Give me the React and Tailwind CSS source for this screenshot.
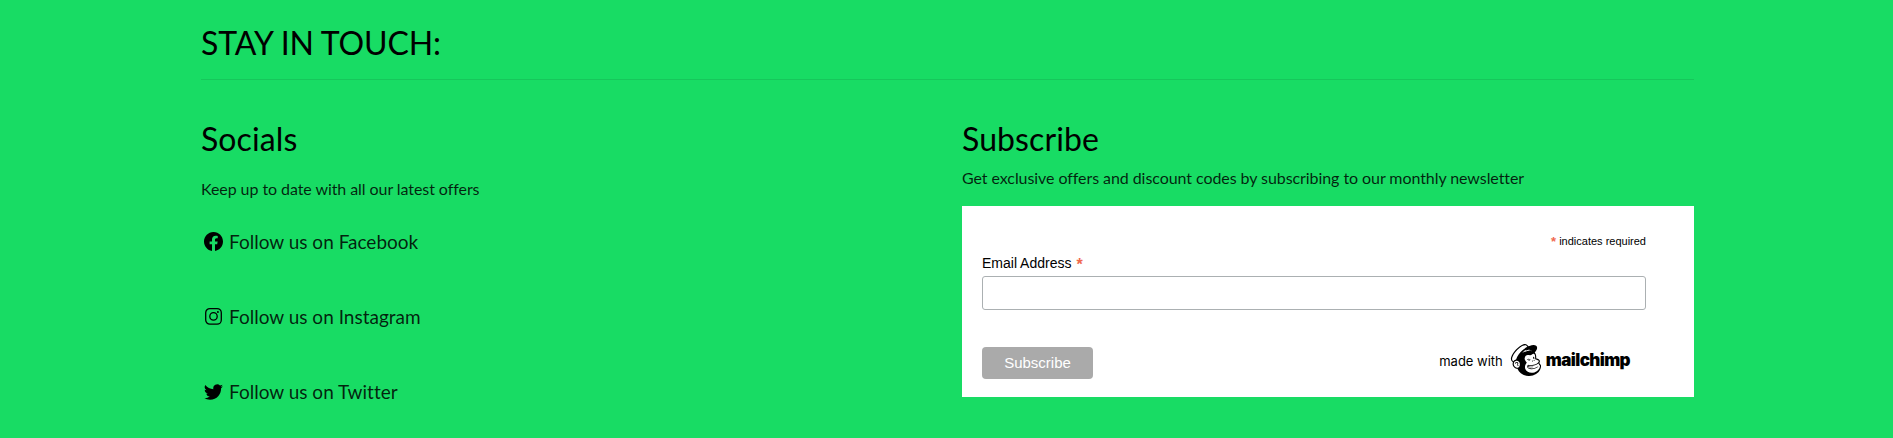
import { BsFacebook, BsTwitter } from "react-icons/bs";
import { SiMailchimp } from "react-icons/si";

function InstagramIcon({ className }) {
  return (
    <svg viewBox="0 0 19 19" fill="none" stroke="currentColor" strokeWidth="1.3" className={className}>
      <rect x="1.7" y="1.6" width="15.6" height="15.6" rx="4.2" />
      <circle cx="9.5" cy="9.4" r="3.7" />
      <circle cx="13.9" cy="5" r="0.95" fill="currentColor" stroke="none" />
    </svg>
  );
}

const socials = [
  { name: "Facebook", Icon: BsFacebook },
  { name: "Instagram", Icon: InstagramIcon },
  { name: "Twitter", Icon: BsTwitter },
];

function Socials() {
  return (
    <section>
      <h2 className="text-[32px] leading-[38px] tracking-[0.1px]">Socials</h2>
      <p className="mt-[19px] text-[16px] leading-6 tracking-[-0.07px] text-black/85">
        Keep up to date with all our latest offers
      </p>
      <ul className="mt-[26px]">
        {socials.map(({ name, Icon }) => (
          <li key={name} className="mb-[47px] flex h-7 items-center gap-[6px] pl-[3px] text-[19px]">
            <Icon className="size-[19px] shrink-0 text-black" />
            <a href="#" className="pt-[3px] text-black/85 [font-variant-ligatures:none]">
              Follow us on {name}
            </a>
          </li>
        ))}
      </ul>
    </section>
  );
}

function Subscribe() {
  return (
    <section>
      <h2 className="text-[32px] leading-[38px] tracking-[0.1px]">Subscribe</h2>
      <p className="mt-[8px] text-[16px] leading-6 tracking-[-0.07px] text-black/85">
        Get exclusive offers and discount codes by subscribing to our monthly newsletter
      </p>
      <form className="mt-[16px] h-[191px] bg-white pt-[28px] pr-12 pl-5 font-['Liberation_Sans',sans-serif] text-black">
        <div className="flex h-[14px] items-center justify-end gap-[3px] text-[11px]">
          <span className="pt-0.5 text-[13px] font-bold text-[#f0694f]">*</span>indicates required
        </div>
        <label className="mt-[5px] flex h-[20px] items-center gap-[5px] text-[14px]">
          Email Address <span className="pt-1 text-[16px] font-bold text-[#f0694f]">*</span>
        </label>
        <input className="mt-[3px] block h-[34px] w-full rounded-[3px] border border-[#abb0b2] bg-white" />
        <div className="mt-[37px] flex items-start justify-between">
          <button type="button" className="h-8 w-[111px] rounded-[4px] bg-[#aaaaaa] text-[15px] text-white">
            Subscribe
          </button>
          <div className="-mt-[3px] mr-4 flex h-8 items-center">
            <span className="mr-[7px] pt-1 font-[Inter,sans-serif] text-[13px]">made with</span>
            <SiMailchimp className="size-8" />
            <span className="ml-1 pt-0.5 font-[Inter,sans-serif] text-[17px] font-black tracking-[-0.6px]">
              mailchimp
            </span>
          </div>
        </div>
      </form>
    </section>
  );
}

export default function App() {
  return (
    <footer className="h-[438px] overflow-hidden bg-[#18dc64] pt-6 pr-[199px] pl-[201px] font-[Lato,sans-serif] text-black">
      <h1 className="text-[32px] leading-[38px] tracking-[-0.14px]">STAY IN TOUCH:</h1>
      <hr className="mt-[17px] border-[#16c75b]" />
      <div className="mt-10 grid grid-cols-[731px_732px] gap-[30px]">
        <Socials />
        <Subscribe />
      </div>
    </footer>
  );
}
